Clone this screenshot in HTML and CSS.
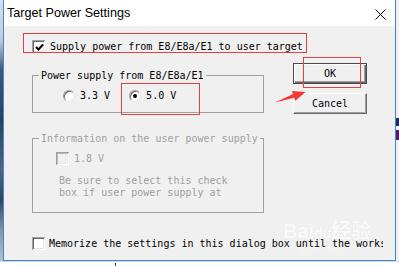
FILE: index.html
```html
<!DOCTYPE html>
<html>
<head>
<meta charset="utf-8">
<link rel="stylesheet" href="styles.css">
</head>
<body>
<div class="screen">
  <div class="desk-left"></div>
  <div class="dialog">
    <div class="titlebar">
      <span class="title">Target Power Settings</span>
      <svg class="close" width="11" height="11" viewBox="0 0 11 11"><path d="M0.5 0.5 L10.5 10.5 M10.5 0.5 L0.5 10.5" stroke="#000" stroke-width="1" fill="none"/></svg>
    </div>
    <div class="body">
      <div class="check top-check">
        <span class="box"><svg width="9" height="9" viewBox="0 0 9 9"><path d="M1 4 L3.5 6.5 L8 1.5" stroke="#000" stroke-width="2" fill="none"/></svg></span>
        <span class="lbl">Supply power from E8/E8a/E1 to user target</span>
      </div>
      <div class="main">
        <div class="groups">
          <fieldset class="group g1">
            <legend>Power supply from E8/E8a/E1</legend>
            <div class="radios">
              <div class="radio"><span class="dot"></span><span class="lbl">3.3 V</span></div>
              <div class="radio on"><span class="dot"></span><span class="lbl">5.0 V</span></div>
            </div>
          </fieldset>
          <fieldset class="group g2 disabled">
            <legend>Information on the user power supply</legend>
            <div class="check sub-check">
              <span class="box off"></span>
              <span class="lbl">1.8 V</span>
            </div>
            <p class="note">Be sure to select this check<br>box if user power supply at</p>
          </fieldset>
        </div>
        <div class="buttons">
          <div class="btn default">OK</div>
          <div class="btn">Cancel</div>
        </div>
      </div>
      <div class="watermark"><span class="wm-big">Bai<span class="paw">du</span>经验</span><span class="wm-small">jingyan.baidu.com</span></div>
      <div class="check memo">
        <span class="box"></span>
        <span class="lbl">Memorize the settings in this dialog box until the workspace is closed</span>
      </div>
    </div>
  </div>
  <div class="desk-right"><span class="spot"></span></div>

  <div class="mark mark-supply"></div>
  <div class="mark mark-five"></div>
  <div class="mark mark-ok"></div>
  <svg class="arrow" width="36" height="20" viewBox="0 0 36 20"><polygon points="3,16.5 22.2,11.7 23.4,14.8 33.5,6 19.8,4.9 21,8" fill="#f03a33"/></svg>
</div>
<div class="under"><span class="bar"></span><span class="under-text">Let Reset pin as low when disconnecting</span></div>
</body>
</html>
```
FILE: styles.css
```css
html, body {
  margin: 0;
  padding: 0;
  background: #ffffff;
}
body {
  width: 399px;
  height: 266px;
  overflow: hidden;
  font-family: "DejaVu Sans Mono", "Liberation Mono", monospace;
  font-size: 10px;
}
.screen {
  position: relative;
  display: flex;
  height: 261px;
}
.desk-left {
  width: 3px;
  background: linear-gradient(#d6dee8 0, #c2ccd8 40px, #40577a 70px, #2c3f5c 120px, #52647e 170px, #33465f 200px, #8595a8 230px, #b6c0cc 261px);
}
.desk-right {
  width: 3px;
  background: #eef0f2;
  display: flex;
  flex-direction: column;
}
.desk-right .spot {
  display: block;
  margin-top: 118px;
  height: 22px;
  background: linear-gradient(#1d2b66 0, #1d2b66 8px, #f0f0f0 8px, #f0f0f0 12px, #5a1a6a 12px, #5a1a6a 22px);
}
.dialog {
  width: 391px;
  border-left: 1px solid #3b8ad9;
  border-right: 1px solid #3b8ad9;
  border-bottom: 1px solid #3b8ad9;
  background: #f0f0f0;
  display: flex;
  flex-direction: column;
}
.titlebar {
  height: 26px;
  background: #ffffff;
  display: flex;
  align-items: center;
  justify-content: space-between;
  padding: 0 9px 0 3px;
}
.title {
  font-family: "Liberation Sans", Arial, sans-serif;
  font-size: 12.6px;
  color: #000;
  line-height: 26px;
}
.close {
  display: block;
  margin-top: 2px;
}
.body {
  flex: 1;
  padding: 14px 0 0 28px;
  color: #000;
  position: relative;
}
.lbl {
  white-space: pre;
  line-height: 13px;
}
.check {
  display: flex;
  align-items: center;
  height: 13px;
}
.box {
  width: 13px;
  height: 13px;
  box-sizing: border-box;
  background: #ffffff;
  box-shadow: inset 1px 1px #a0a0a0, inset -1px -1px #ffffff, inset 2px 2px #696969, inset -2px -2px #e3e3e3;
  display: flex;
  align-items: center;
  justify-content: center;
  flex: none;
}
.box svg {
  display: block;
  margin: 1px 0 0 1px;
}
.box.off {
  background: #f0f0f0;
  box-shadow: inset 1px 1px #a0a0a0, inset -1px -1px #ffffff, inset 2px 2px #b9b9b9, inset -2px -2px #e8e8e8;
}
.top-check .lbl {
  margin-left: 5px;
}
.main {
  display: flex;
  gap: 29px;
  margin-top: 10px;
}
.groups {
  width: 232px;
  padding-top: 6px;
}
.group {
  margin: 0;
  width: 232px;
  box-sizing: border-box;
  border: 1px solid #a0a0a0;
  padding: 7px 0 10px 6px;
  min-width: 0;
}
.group legend {
  padding: 0 2px;
  line-height: 13px;
  white-space: pre;
}
.radios {
  display: flex;
  margin-left: 24px;
  height: 13px;
  align-items: center;
}
.radio {
  display: flex;
  align-items: center;
}
.radio + .radio {
  margin-left: 19px;
}
.dot {
  width: 12px;
  height: 12px;
  box-sizing: border-box;
  border-radius: 50%;
  background: #ffffff;
  border: 1px solid;
  border-color: #9a9a9a #e6e6e6 #e6e6e6 #9a9a9a;
  box-shadow: inset 1px 1px 0 #6a6a6a;
  margin-right: 5px;
  display: flex;
  align-items: center;
  justify-content: center;
}
.radio.on .dot::after {
  content: "";
  width: 4px;
  height: 4px;
  border-radius: 50%;
  background: #000;
}
.g2 {
  margin-top: 19px;
  padding-bottom: 13px;
}
.disabled {
  color: #a0a0a0;
}
.sub-check {
  margin-left: 17px;
}
.sub-check .lbl {
  margin-left: 5px;
}
.note {
  margin: 10px 0 0 20px;
  line-height: 12px;
  white-space: pre;
}
.buttons {
  display: flex;
  flex-direction: column;
  gap: 9px;
}
.btn {
  width: 74px;
  height: 21px;
  box-sizing: border-box;
  background: #f0f0f0;
  border: 1px solid;
  border-color: #ffffff #696969 #696969 #ffffff;
  box-shadow: inset -1px -1px #a0a0a0;
  display: flex;
  align-items: center;
  justify-content: center;
  line-height: 13px;
}
.btn.default {
  border: 1px solid #4a4a4a;
  box-shadow: inset 1px 1px #ffffff, inset -1px -1px #696969, inset -2px -2px #a0a0a0;
}
.memo {
  margin-top: 24px;
  width: 351px;
  overflow: hidden;
  position: relative;
  z-index: 1;
}
.memo .lbl {
  margin-left: 4px;
}
.mark {
  position: absolute;
  border: 1px solid #e8403e;
  box-sizing: border-box;
}
.mark-supply {
  left: 23px;
  top: 33px;
  width: 284px;
  height: 20px;
}
.mark-five {
  left: 121px;
  top: 83px;
  width: 79px;
  height: 32px;
}
.mark-ok {
  left: 303px;
  top: 57px;
  width: 58px;
  height: 31px;
}
.arrow {
  position: absolute;
  left: 272px;
  top: 86px;
}
.watermark {
  position: absolute;
  left: 279px;
  top: 194px;
  display: flex;
  flex-direction: column;
  align-items: center;
  color: #f9f9f9;
  text-shadow: 0 0 1px rgba(0, 0, 0, 0.06);
  pointer-events: none;
}
.wm-big {
  font-family: "Liberation Sans", "Noto Sans CJK SC", sans-serif;
  font-weight: bold;
  font-size: 20px;
  line-height: 22px;
}
.paw {
  font-size: 14px;
}
.wm-small {
  font-family: "Liberation Sans", sans-serif;
  font-size: 9px;
  line-height: 10px;
}
.under {
  height: 5px;
  overflow: hidden;
  display: flex;
  background: #ffffff;
  border-top: 1px solid #d8d8d8;
  box-sizing: border-box;
}
.under .bar {
  width: 1px;
  height: 5px;
  margin: 1px 0 0 115px;
  background: #333;
}
.under-text {
  margin-left: 16px;
  margin-top: 2px;
  font-family: "Liberation Sans", sans-serif;
  font-size: 13px;
  line-height: 13px;
  color: #1a1a2a;
  white-space: pre;
}
```
